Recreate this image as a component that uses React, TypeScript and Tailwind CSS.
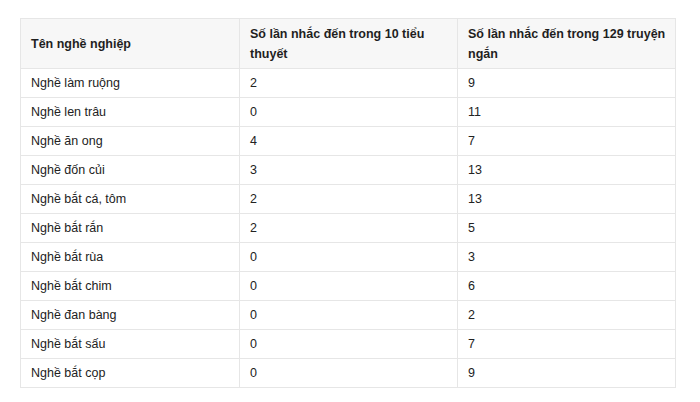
const ROWS: [string, string, string][] = [
  ['Nghề làm ruộng', '2', '9'],
  ['Nghề len trâu', '0', '11'],
  ['Nghề ăn ong', '4', '7'],
  ['Nghề đốn củi', '3', '13'],
  ['Nghề bắt cá, tôm', '2', '13'],
  ['Nghề bắt rắn', '2', '5'],
  ['Nghề bắt rùa', '0', '3'],
  ['Nghề bắt chim', '0', '6'],
  ['Nghề đan bàng', '0', '2'],
  ['Nghề bắt sấu', '0', '7'],
  ['Nghề bắt cọp', '0', '9'],
];

const cell = 'border border-[#e6e6e6] pl-[10px] pr-[6px] align-middle';

export default function App() {
  return (
    <div className="min-h-screen bg-white pl-[20px] pt-[18px]" style={{ fontFamily: '"Liberation Sans", Arial, sans-serif' }}>
      <table className="w-[655px] table-fixed border-collapse text-[12.5px] text-[#1f1f1f]">
        <colgroup>
          <col className="w-[219px]" />
          <col className="w-[218px]" />
          <col className="w-[218px]" />
        </colgroup>
        <thead>
          <tr className="h-[50px] bg-[#f7f7f7] text-left font-bold leading-[20px]">
            <th className={cell}>Tên nghề nghiệp</th>
            <th className={cell}>Số lần nhắc đến trong 10 tiểu thuyết</th>
            <th className={cell}>Số lần nhắc đến trong 129 truyện ngắn</th>
          </tr>
        </thead>
        <tbody>
          {ROWS.map(([name, a, b]) => (
            <tr key={name} className="h-[29px] leading-[18px] text-[#222]">
              <td className={cell}>{name}</td>
              <td className={cell}>{a}</td>
              <td className={cell}>{b}</td>
            </tr>
          ))}
        </tbody>
      </table>
    </div>
  );
}
